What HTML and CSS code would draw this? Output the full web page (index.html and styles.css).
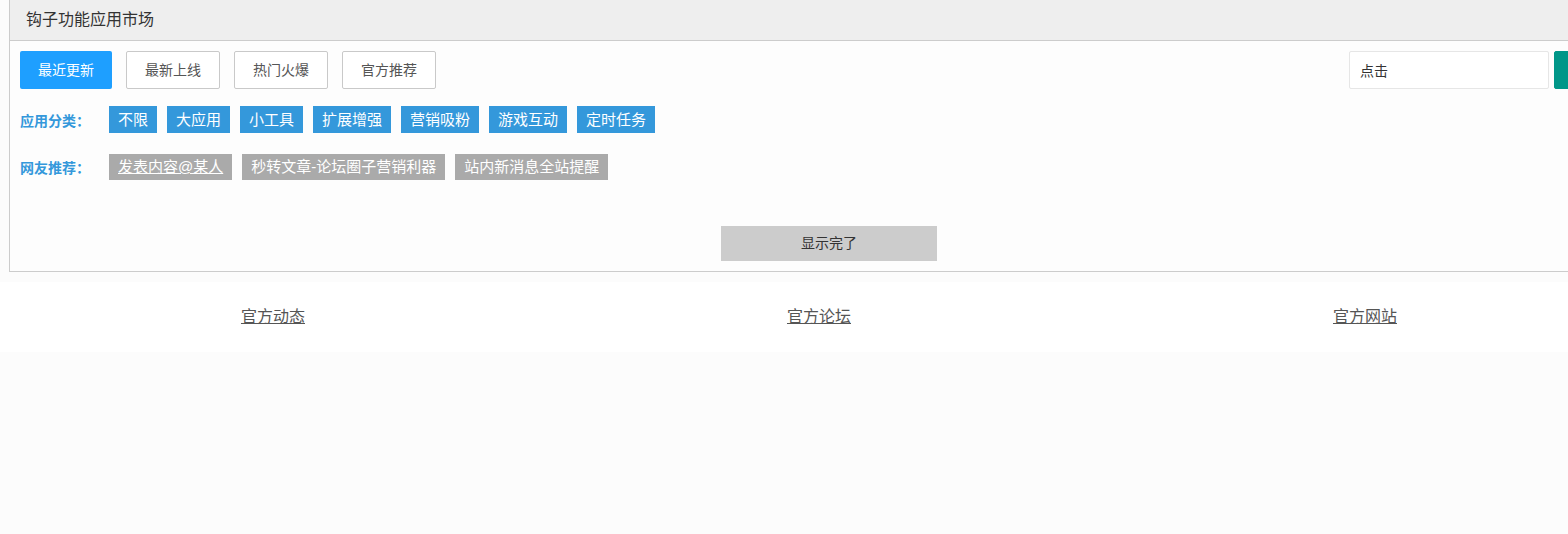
FILE: index.html
```html
<!DOCTYPE html>
<html lang="zh-CN">
<head>
    <meta charset="UTF-8">
    <title>钩子功能应用市场</title>
    <link rel="stylesheet" href="styles.css">
</head>
<body>
    <div class="page">
        <div class="panel">
            <div class="panel-header">钩子功能应用市场</div>
            <div class="panel-body">
                <div class="toolbar">
                    <div class="sort">
                        <a class="btn btn-primary">最近更新</a>
                        <a class="btn">最新上线</a>
                        <a class="btn">热门火爆</a>
                        <a class="btn">官方推荐</a>
                    </div>
                    <div class="search">
                        <input class="search-input" type="text" value="点击">
                        <a class="btn btn-green" title="搜索">
                            <svg width="16" height="16" viewBox="0 0 16 16" fill="none" stroke="#fff" stroke-width="2">
                                <circle cx="7" cy="7" r="5"/>
                                <path d="M11 11l4 4"/>
                            </svg>
                        </a>
                    </div>
                </div>
                <div class="filter filter-cat">
                    <span class="filter-label">应用分类：</span>
                    <a class="tag">不限</a>
                    <a class="tag">大应用</a>
                    <a class="tag">小工具</a>
                    <a class="tag">扩展增强</a>
                    <a class="tag">营销吸粉</a>
                    <a class="tag">游戏互动</a>
                    <a class="tag">定时任务</a>
                </div>
                <div class="filter filter-rec">
                    <span class="filter-label">网友推荐：</span>
                    <a class="tag tag-gray tag-link">发表内容@某人</a>
                    <a class="tag tag-gray">秒转文章-论坛圈子营销利器</a>
                    <a class="tag tag-gray">站内新消息全站提醒</a>
                </div>
                <div class="more">
                    <span class="more-bar">显示完了</span>
                </div>
            </div>
        </div>
        <div class="footer">
            <a class="footer-link">官方动态</a>
            <a class="footer-link">官方论坛</a>
            <a class="footer-link">官方网站</a>
        </div>
    </div>
</body>
</html>
```

FILE: styles.css
```css
html, body {
    margin: 0;
    padding: 0;
    overflow: hidden;
    background: #fcfcfc;
    font-family: "Liberation Sans", "Noto Sans CJK SC", sans-serif;
    color: #333;
}
.page {
    width: 1658px;
}
.panel {
    margin: 0 9px;
    border: 1px solid #ccc;
    border-top: 0;
    background: #fdfdfd;
}
.panel-header {
    height: 40px;
    line-height: 40px;
    padding-left: 16px;
    background: #eee;
    border-bottom: 1px solid #ccc;
    font-size: 16px;
    color: #333;
}
.panel-body {
    padding: 10px;
}
.toolbar {
    display: flex;
    justify-content: space-between;
}
.sort {
    display: flex;
    gap: 14px;
}
.btn {
    display: inline-block;
    height: 36px;
    line-height: 36px;
    padding: 0 18px;
    border: 1px solid #c9c9c9;
    border-radius: 2px;
    background: #fff;
    color: #555;
    font-size: 14px;
    white-space: nowrap;
    cursor: pointer;
}
.btn-primary {
    height: 38px;
    line-height: 38px;
    border: 0;
    background: #1e9fff;
    color: #fff;
}
.btn-green {
    display: flex;
    align-items: center;
    background: #009688;
    border-color: #009688;
    padding: 0 33px;
}
.search {
    display: flex;
    gap: 5px;
}
.search-input {
    width: 178px;
    height: 36px;
    padding: 0 10px;
    border: 1px solid #e6e6e6;
    border-radius: 2px;
    background: #fff;
    font-family: inherit;
    font-size: 14px;
    color: #333;
    outline: none;
}
.filter {
    display: flex;
    align-items: center;
    gap: 10px;
}
.filter-cat {
    margin-top: 17px;
}
.filter-rec {
    margin-top: 21px;
}
.filter-label {
    width: 79px;
    font-size: 14px;
    font-weight: bold;
    color: #3498db;
}
.tag {
    display: inline-block;
    height: 27px;
    line-height: 27px;
    padding: 0 9px;
    background: #3498db;
    color: #fff;
    font-size: 15px;
    cursor: pointer;
}
.tag-gray {
    background: #aaa;
    height: 26px;
    line-height: 26px;
}
.tag-link {
    text-decoration: underline;
}
.more {
    margin-top: 46px;
    text-align: center;
}
.more-bar {
    display: inline-block;
    width: 216px;
    height: 35px;
    line-height: 35px;
    background: #ccc;
    color: #333;
    font-size: 14px;
}
.footer {
    display: grid;
    grid-template-columns: repeat(3, 1fr);
    width: 1638px;
    margin-top: 10px;
    height: 70px;
    line-height: 70px;
    background: #fff;
    text-align: center;
}
.footer-link {
    color: #555;
    font-size: 16px;
    text-decoration: underline;
}
```
